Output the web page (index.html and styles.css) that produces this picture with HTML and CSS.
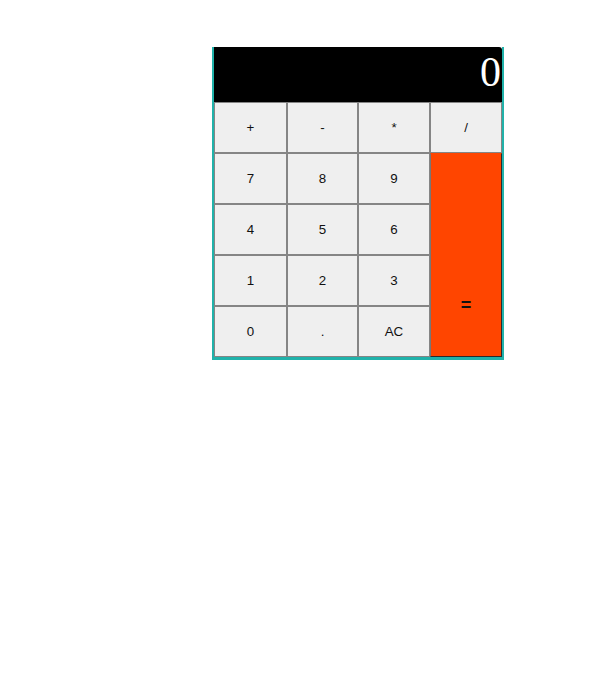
FILE: index.html
```html
<!DOCTYPE html>
<html>
<head>
<meta charset="utf-8">
<link rel="stylesheet" href="styles.css">
</head>
<body>
<div class="calc">
  <div class="display">0</div>
  <div class="keys">
    <button class="key">+</button>
    <button class="key">-</button>
    <button class="key">*</button>
    <button class="key">/</button>
    <button class="key">7</button>
    <button class="key">8</button>
    <button class="key">9</button>
    <button class="key equals">=</button>
    <button class="key">4</button>
    <button class="key">5</button>
    <button class="key">6</button>
    <button class="key">1</button>
    <button class="key">2</button>
    <button class="key">3</button>
    <button class="key">0</button>
    <button class="key">.</button>
    <button class="key">AC</button>
  </div>
</div>
</body>
</html>
```
FILE: styles.css
```css
body {
  margin: 0;
  background: #ffffff;
}
.calc {
  margin: 47px 0 0 212px;
  width: 288px;
  border: 2px solid #20b2aa;
  border-top: 0;
  border-bottom-width: 3px;
}
.display {
  height: 55px;
  background: #000;
  color: #fff;
  font-family: "Liberation Serif", serif;
  font-size: 42px;
  line-height: 50px;
  text-align: right;
  padding-right: 1px;
  border-top-right-radius: 3px;
}
.keys {
  display: grid;
  grid-template-columns: 73px 71px 72px 72px;
  grid-template-rows: repeat(5, 51px);
}
.key {
  margin: 0;
  padding: 0;
  background: #efefef;
  border: 1px solid #858585;
  font-family: "Liberation Sans", Arial, sans-serif;
  font-size: 13.33px;
  color: #111;
}
.equals {
  grid-column: 4;
  grid-row: 2 / span 4;
  padding-top: 100px;
  background: #ff4500;
  border-color: #ff4500 #2b2b2b #2b2b2b #777;
  font-weight: bold;
  font-size: 18px;
  color: #111;
}
```
